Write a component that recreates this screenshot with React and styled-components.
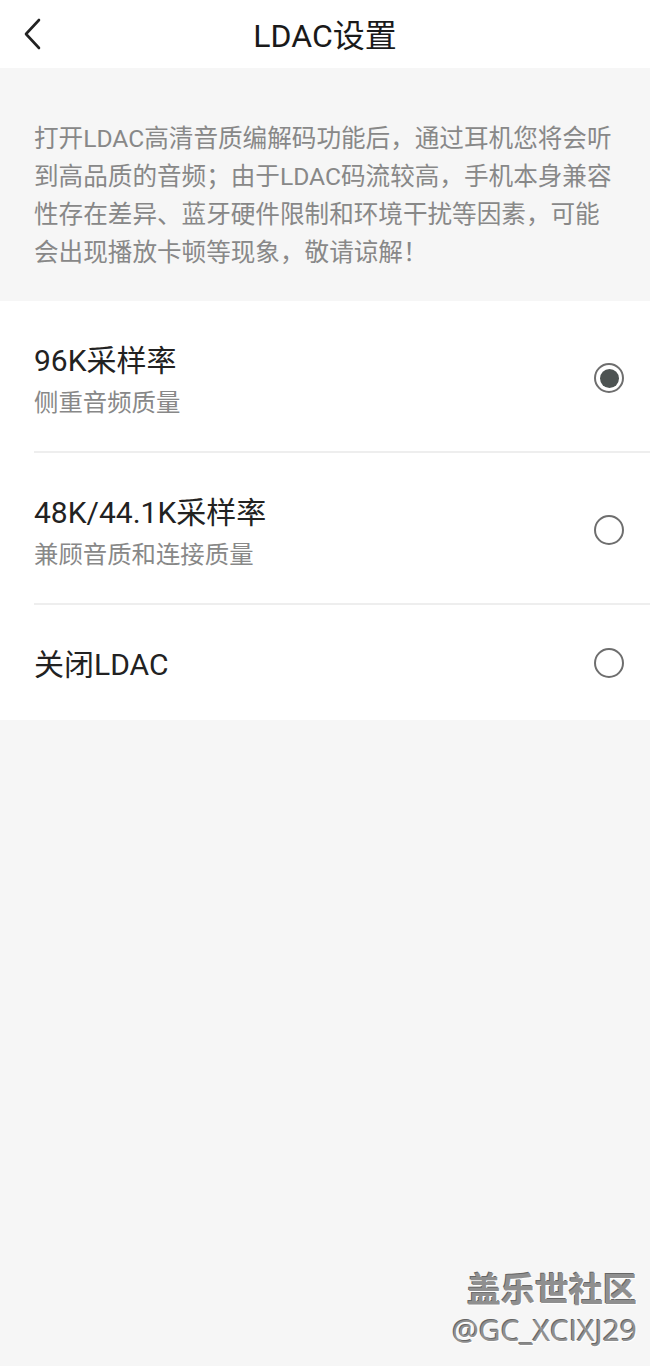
import styled, { createGlobalStyle } from "styled-components";

const GlobalStyle = createGlobalStyle`
  html, body {
    margin: 0;
    padding: 0;
    background: #f6f6f6;
  }
  * {
    box-sizing: border-box;
  }
`;

const options = [
  { id: "96k", title: "96K采样率", desc: "侧重音频质量" },
  { id: "48k", title: "48K/44.1K采样率", desc: "兼顾音质和连接质量" },
  { id: "off", title: "关闭LDAC" },
];

export default function App() {
  const selected = "96k";
  return (
    <Page>
      <GlobalStyle />
      <Header>
        <BackButton aria-label="返回">
          <svg width="22" height="32" viewBox="0 0 22 32" fill="none">
            <path
              d="M17 2 L4 16 L17 30"
              stroke="#222"
              strokeWidth="2.6"
              strokeLinecap="round"
              strokeLinejoin="round"
            />
          </svg>
        </BackButton>
        <Title>LDAC设置</Title>
      </Header>

      <Notice>
        打开LDAC高清音质编解码功能后，通过耳机您将会听
        <br />
        到高品质的音频；由于LDAC码流较高，手机本身兼容
        <br />
        性存在差异、蓝牙硬件限制和环境干扰等因素，可能
        <br />
        会出现播放卡顿等现象，敬请谅解！
      </Notice>

      <List>
        {options.map((o, i) => (
          <Row key={o.id} $last={i === options.length - 1}>
            <RowText>
              <RowTitle>{o.title}</RowTitle>
              {o.desc && <RowDesc>{o.desc}</RowDesc>}
            </RowText>
            <Radio $checked={o.id === selected} />
          </Row>
        ))}
      </List>

      <Watermark>
        <strong>盖乐世社区</strong>
        <span>@GC_XCIXJ29</span>
      </Watermark>
    </Page>
  );
}

const Page = styled.div`
  position: relative;
  min-height: 1366px;
  background: #f6f6f6;
  font-family: "Roboto", "Noto Sans CJK SC", sans-serif;
`;

const Header = styled.header`
  position: relative;
  height: 68px;
  background: #fff;
  display: flex;
  align-items: center;
  justify-content: center;
`;

const BackButton = styled.button`
  position: absolute;
  left: 22px;
  top: 18px;
  padding: 0;
  border: none;
  background: none;
  display: flex;
`;

const Title = styled.h1`
  margin: 0;
  font-size: 32px;
  font-weight: 400;
  color: #1a1a1a;
  line-height: 40px;
  padding-top: 4px;
`;

const Notice = styled.p`
  margin: 0;
  padding: 52px 10px 0 34px;
  font-size: 24.6px;
  line-height: 38px;
  color: #888;
  height: 233px;
  white-space: nowrap;
`;

const List = styled.section`
  background: #fff;
`;

const Row = styled.div`
  margin-left: 34px;
  padding: 40px 26px ${(p) => (p.$last ? "35px" : "32px")} 0;
  display: flex;
  align-items: center;
  justify-content: space-between;
  border-bottom: ${(p) => (p.$last ? "none" : "2px solid #eeeeee")};
`;

const RowText = styled.div`
  display: flex;
  flex-direction: column;
`;

const RowTitle = styled.div`
  font-size: 30px;
  line-height: 40px;
  color: #222;
`;

const RowDesc = styled.div`
  margin-top: 6px;
  font-size: 24.4px;
  line-height: 32px;
  color: #888;
`;

const Radio = styled.span`
  width: 30px;
  height: 30px;
  margin-top: -4px;
  border-radius: 50%;
  border: 2px solid #6e6e6e;
  display: flex;
  align-items: center;
  justify-content: center;

  &::after {
    content: "";
    width: 19px;
    height: 19px;
    border-radius: 50%;
    background: #4d5352;
    display: ${(p) => (p.$checked ? "block" : "none")};
  }
`;

const Watermark = styled.div`
  position: absolute;
  right: 13px;
  bottom: 16px;
  display: flex;
  flex-direction: column;
  align-items: flex-end;
  color: #8f8f8f;
  text-shadow: 1px 1px 0 #fff, -1px -1px 0 #666;
  font-family: "Noto Sans CJK SC", sans-serif;

  strong {
    font-size: 34px;
    line-height: 44px;
    font-weight: 700;
  }

  span {
    font-family: "Open Sans", "Noto Sans", sans-serif;
    font-size: 30px;
    line-height: 40px;
    font-weight: 400;
  }
`;
